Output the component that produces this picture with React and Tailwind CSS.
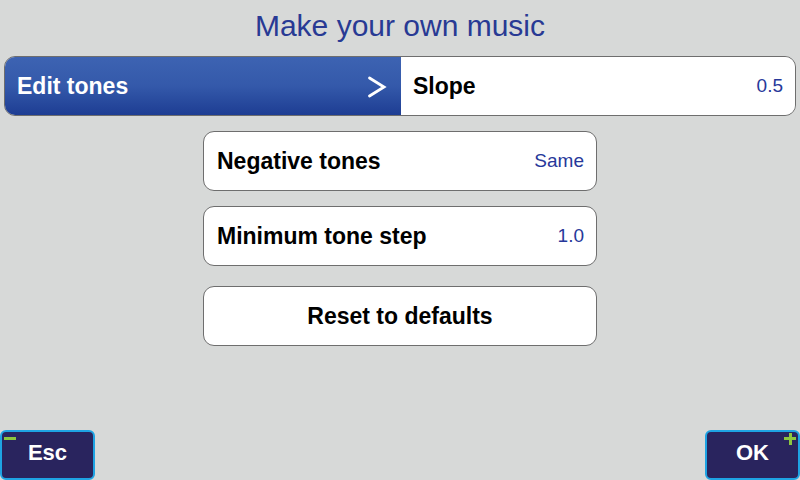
import React from "react";

function Row({ label, value, className = "" }) {
  return (
    <div className={`h-[60px] w-[394px] rounded-[11px] border border-[#6e6e6e] bg-white flex items-center justify-between pl-[13px] pr-[12px] ${className}`}>
      <span className="text-[23px] font-bold text-black">{label}</span>
      {value && <span className="text-[19px] text-[#27389a]">{value}</span>}
    </div>
  );
}

export default function App() {
  return (
    <div
      className="w-[800px] h-[480px] bg-[#d7d9d8] flex flex-col overflow-hidden"
      style={{ fontFamily: '"Liberation Sans", Arial, sans-serif' }}
    >
      <div className="pt-[11px] text-center text-[30px] leading-[30px] text-[#283a94]">
        Make your own music
      </div>

      <div className="mt-[15px] mx-[4px] h-[60px] flex rounded-[11px] border border-[#6e6e6e] overflow-hidden">
        <div className="flex-1 flex items-center justify-between pl-[12px] pr-[14px] bg-gradient-to-b from-[#3d63b2] via-[#3459aa] to-[#1e3d93]">
          <span className="text-[23px] font-bold text-white">Edit tones</span>
          <svg width="20" height="22" viewBox="0 0 20 22" className="mt-[1px]">
            <polyline points="2.5,2 17,11 2.5,20" fill="none" stroke="white" strokeWidth="2.8" strokeLinecap="round" strokeLinejoin="miter" />
          </svg>
        </div>
        <div className="flex-1 bg-white flex items-center justify-between pl-[12px] pr-[12px]">
          <span className="text-[23px] font-bold text-black">Slope</span>
          <span className="text-[19px] text-[#27389a]">0.5</span>
        </div>
      </div>

      <div className="flex flex-col items-center mt-[15px]">
        <Row label="Negative tones" value="Same" />
        <Row label="Minimum tone step" value="1.0" className="mt-[15px]" />
        <div className="mt-[20px] h-[60px] w-[394px] rounded-[11px] border border-[#6e6e6e] bg-white flex items-center justify-center">
          <span className="text-[23px] font-bold text-black">Reset to defaults</span>
        </div>
      </div>

      <div className="mt-auto flex justify-between items-end">
        <div className="relative w-[95px] h-[50px] rounded-[6px] border-2 border-[#1ea3e3] bg-[#29245e] flex items-center justify-center pb-[5px]">
          <span className="absolute left-[2px] top-[5px] w-[12px] h-[3px] bg-[#8cc63f]"></span>
          <span className="text-[22px] font-bold text-white">Esc</span>
        </div>
        <div className="relative w-[95px] h-[50px] rounded-[6px] border-2 border-[#1ea3e3] bg-[#29245e] flex items-center justify-center pb-[5px]">
          <span className="absolute right-[2px] top-[5px] w-[12px] h-[3px] bg-[#8cc63f]"></span>
          <span className="absolute right-[6.5px] top-[0.5px] w-[3px] h-[12px] bg-[#8cc63f]"></span>
          <span className="text-[22px] font-bold text-white">OK</span>
        </div>
      </div>
    </div>
  );
}
